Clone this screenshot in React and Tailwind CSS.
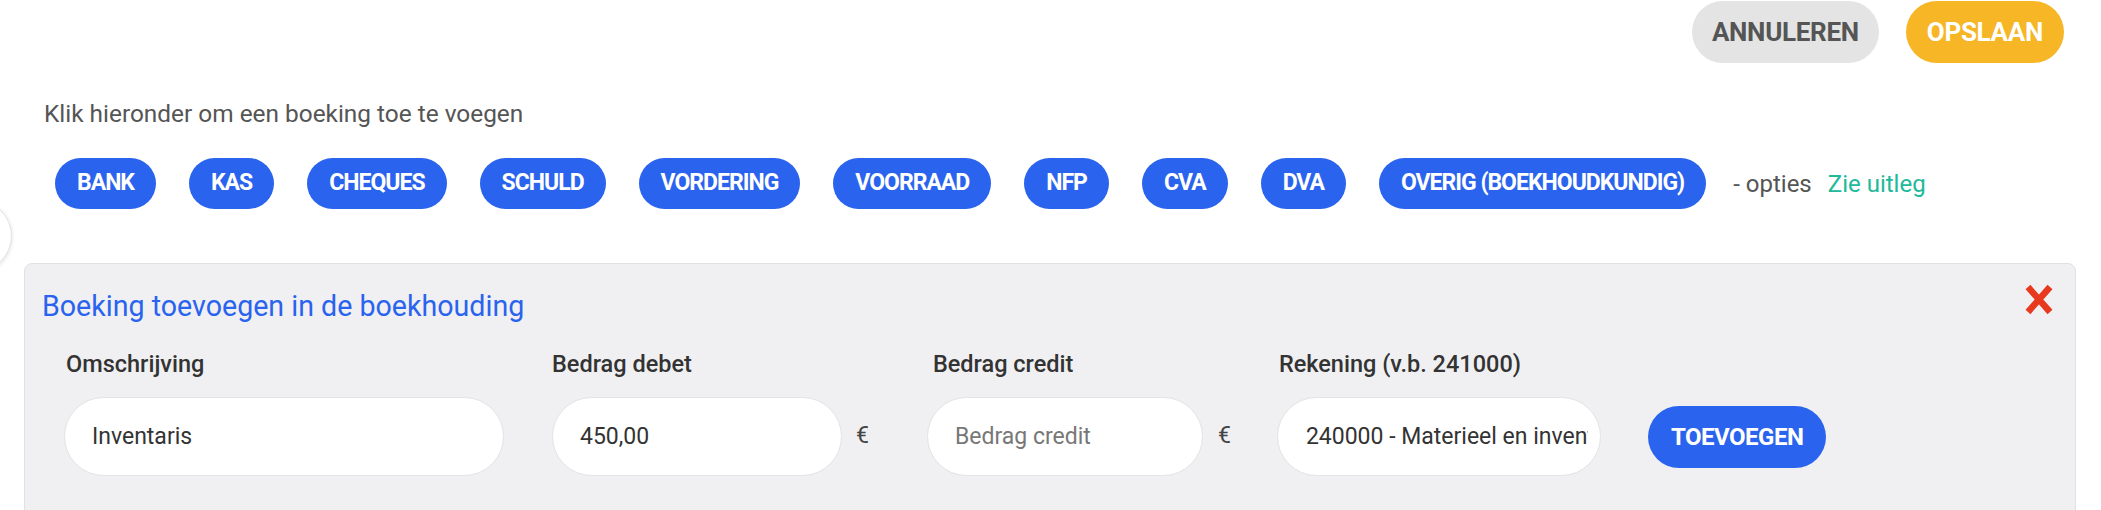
import React from "react";

const chips = ["BANK", "KAS", "CHEQUES", "SCHULD", "VORDERING", "VOORRAAD", "NFP", "CVA", "DVA", "OVERIG (BOEKHOUDKUNDIG)"];

function Euro({ ml }) {
  return <span className={`${ml} text-[23px] text-[#444]`}>€</span>;
}

export default function App() {
  return (
    <div className="relative h-[510px] overflow-hidden bg-white font-['Roboto',sans-serif]">
      {/* floating circle at left edge */}
      <div className="absolute left-[-60px] top-[200px] h-[72px] w-[72px] rounded-full border border-[#e3e3e3] bg-white shadow-[0_1px_4px_rgba(0,0,0,0.12)]" />

      {/* top actions */}
      <div className="flex justify-end gap-[27px] pr-[37px] pt-[1px]">
        <button className="h-[62px] rounded-full bg-[#e4e4e4] px-[20px] text-[26px] font-bold tracking-[-0.3px] text-[#555]">ANNULEREN</button>
        <button className="h-[62px] rounded-full bg-[#f6b626] px-[21px] text-[26px] font-bold tracking-[-0.3px] text-white">OPSLAAN</button>
      </div>

      <p className="mt-[33px] pl-[44px] text-[24.4px] leading-[36px] text-[#555]">Klik hieronder om een boeking toe te voegen</p>

      {/* chips */}
      <div className="mt-[26px] flex items-center gap-[33px] pl-[55px]">
        {chips.map((c) => (
          <button key={c} className="h-[51px] rounded-full bg-[#2a63ee] px-[22px] text-[23px] font-bold tracking-[-1px] text-white">
            {c}
          </button>
        ))}
        <div className="-ml-[6px] flex items-center gap-[16px] text-[24px]">
          <span className="text-[#555]">- opties</span>
          <span className="text-[#20b99a]">Zie uitleg</span>
        </div>
      </div>

      {/* panel */}
      <div className="relative mx-[25px] ml-[24px] mt-[54px] h-[300px] rounded-[8px] border border-[#e1e1e3] bg-[#f0f0f2] pl-[17px] pt-[25px]">
        <h2 className="text-[28.6px] leading-[35px] text-[#2a63ee]">Boeking toevoegen in de boekhouding</h2>
        <button className="absolute right-[22px] top-[20px]" aria-label="sluiten">
          <svg width="28" height="31" viewBox="0 0 28 31">
            <path d="M3 3 L25 28 M25 3 L3 28" stroke="#e8381e" strokeWidth="6.5" fill="none" />
          </svg>
        </button>

        <div className="mt-[22px] flex items-end pl-[22px]">
          {/* Omschrijving */}
          <div className="flex flex-col">
            <label className="pl-[2px] text-[23.5px] font-medium leading-[36px] text-[#333]">Omschrijving</label>
            <input
              readOnly
              value="Inventaris"
              className="mt-[15px] h-[79px] w-[440px] rounded-full border border-[#e3e3e3] bg-white pl-[27px] pr-[12px] text-[23px] text-[#333] outline-none"
            />
          </div>

          {/* Bedrag debet */}
          <div className="ml-[48px] flex flex-col">
            <label className="text-[23.5px] font-medium leading-[36px] text-[#333]">Bedrag debet</label>
            <div className="mt-[15px] flex items-center">
              <input
                readOnly
                value="450,00"
                className="h-[79px] w-[290px] rounded-full border border-[#e3e3e3] bg-white pl-[27px] pr-[12px] text-[23px] text-[#333] outline-none"
              />
              <Euro ml="ml-[14px]" />
            </div>
          </div>

          {/* Bedrag credit */}
          <div className="ml-[58px] flex flex-col">
            <label className="pl-[6px] text-[23.5px] font-medium leading-[36px] text-[#333]">Bedrag credit</label>
            <div className="mt-[15px] flex items-center">
              <input
                readOnly
                placeholder="Bedrag credit"
                className="h-[79px] w-[276px] rounded-full border border-[#e3e3e3] bg-white pl-[27px] pr-[12px] text-[23px] text-[#333] outline-none placeholder:text-[#777]"
              />
              <Euro ml="ml-[15px]" />
            </div>
          </div>

          {/* Rekening */}
          <div className="ml-[46px] flex flex-col">
            <label className="pl-[2px] text-[23.5px] font-medium leading-[36px] text-[#333]">Rekening (v.b. 241000)</label>
            <input
              readOnly
              value="240000 - Materieel en inventaris"
              className="mt-[15px] h-[79px] w-[324px] rounded-full border border-[#e3e3e3] bg-white pl-[28px] pr-[12px] text-[23px] text-[#333] outline-none"
            />
          </div>

          <button className="mb-[8px] ml-[47px] h-[62px] rounded-full bg-[#2a63ee] px-[23px] text-[24px] font-bold tracking-[-0.5px] text-white">TOEVOEGEN</button>
        </div>
      </div>
    </div>
  );
}
